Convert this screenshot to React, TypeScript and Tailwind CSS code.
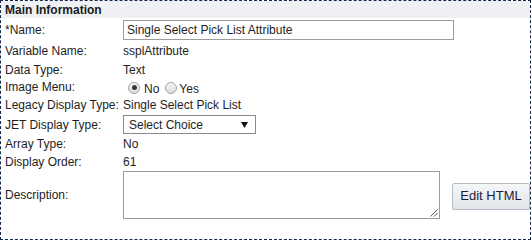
import type { ReactNode } from "react";

const font = { fontFamily: '"Liberation Sans", Arial, sans-serif' };

function Row({ label, h, children }: { label: string; h: string; children?: ReactNode }) {
  return (
    <div className={`flex items-center ${h}`}>
      <div className="w-[122px] shrink-0 pl-[4px] text-[12px] leading-[14px] text-[#1e1e1e]">{label}</div>
      <div className="flex min-w-0 flex-1 items-center text-[12px] leading-[14px] text-[#1e1e1e]">{children}</div>
    </div>
  );
}

function Radio({ checked }: { checked?: boolean }) {
  return (
    <span className="flex h-[12px] w-[12px] items-center justify-center rounded-full border border-[#a3a3a3] bg-gradient-to-b from-[#f7f7f7] to-[#dcdcdc]">
      {checked && <span className="h-[5px] w-[5px] rounded-full bg-[#3a3a3a]" />}
    </span>
  );
}

export default function App() {
  return (
    <div className="h-[240px] w-[531px] border border-dashed border-[#15284d] bg-white" style={font}>
      <div className="flex h-[17px] items-center bg-[#eff0f4] pl-[4px] text-[12px] font-bold leading-[14px] text-[#1a1a1a]">
        Main Information
      </div>

      <Row label="*Name:" h="h-[23px]">
        <div className="flex h-[20px] w-[331px] items-center border border-[#9c9c9c] pl-[3px]">
          Single Select Pick List Attribute
        </div>
      </Row>
      <Row label="Variable Name:" h="h-[19px]">
        ssplAttribute
      </Row>
      <Row label="Data Type:" h="h-[19px]">
        Text
      </Row>
      <Row label="Image Menu:" h="h-[16px]">
        <div className="mt-[3px] flex items-center">
          <span className="ml-[5px] mr-[4px] -translate-y-[1px]">
            <Radio checked />
          </span>
          <span>No</span>
          <span className="ml-[6px] mr-[2px] -translate-y-[1px]">
            <Radio />
          </span>
          <span>Yes</span>
        </div>
      </Row>
      <Row label="Legacy Display Type:" h="h-[20px]">
        Single Select Pick List
      </Row>
      <Row label="JET Display Type:" h="h-[19px]">
        <div className="flex h-[19px] w-[133px] items-center justify-between border border-[#8a8a8a] pl-[5px] pr-[7px]">
          <span>Select Choice</span>
          <svg width="7" height="6" viewBox="0 0 7 6">
            <path d="M0 0H7L3.5 6Z" fill="#111" />
          </svg>
        </div>
      </Row>
      <Row label="Array Type:" h="h-[20px]">
        No
      </Row>
      <Row label="Display Order:" h="h-[16px]">
        61
      </Row>
      <Row label="Description:" h="h-[49px]">
        <div className="relative h-[48px] w-[317px] border border-[#9c9c9c]">
          <svg className="absolute bottom-[1px] right-[1px]" width="9" height="9" viewBox="0 0 9 9">
            <path d="M8.5 1.5L1.5 8.5M8.5 5L5 8.5" stroke="#555" strokeWidth="1" />
          </svg>
        </div>
        <button className="ml-[12px] mt-[3px] flex h-[27px] w-[78px] items-center justify-center rounded-[2px] border border-[#b4bcc6] bg-gradient-to-b from-[#f5f6f8] to-[#e0e4e9] text-[13px] text-[#1c1c38]">
          Edit HTML
        </button>
      </Row>
    </div>
  );
}
